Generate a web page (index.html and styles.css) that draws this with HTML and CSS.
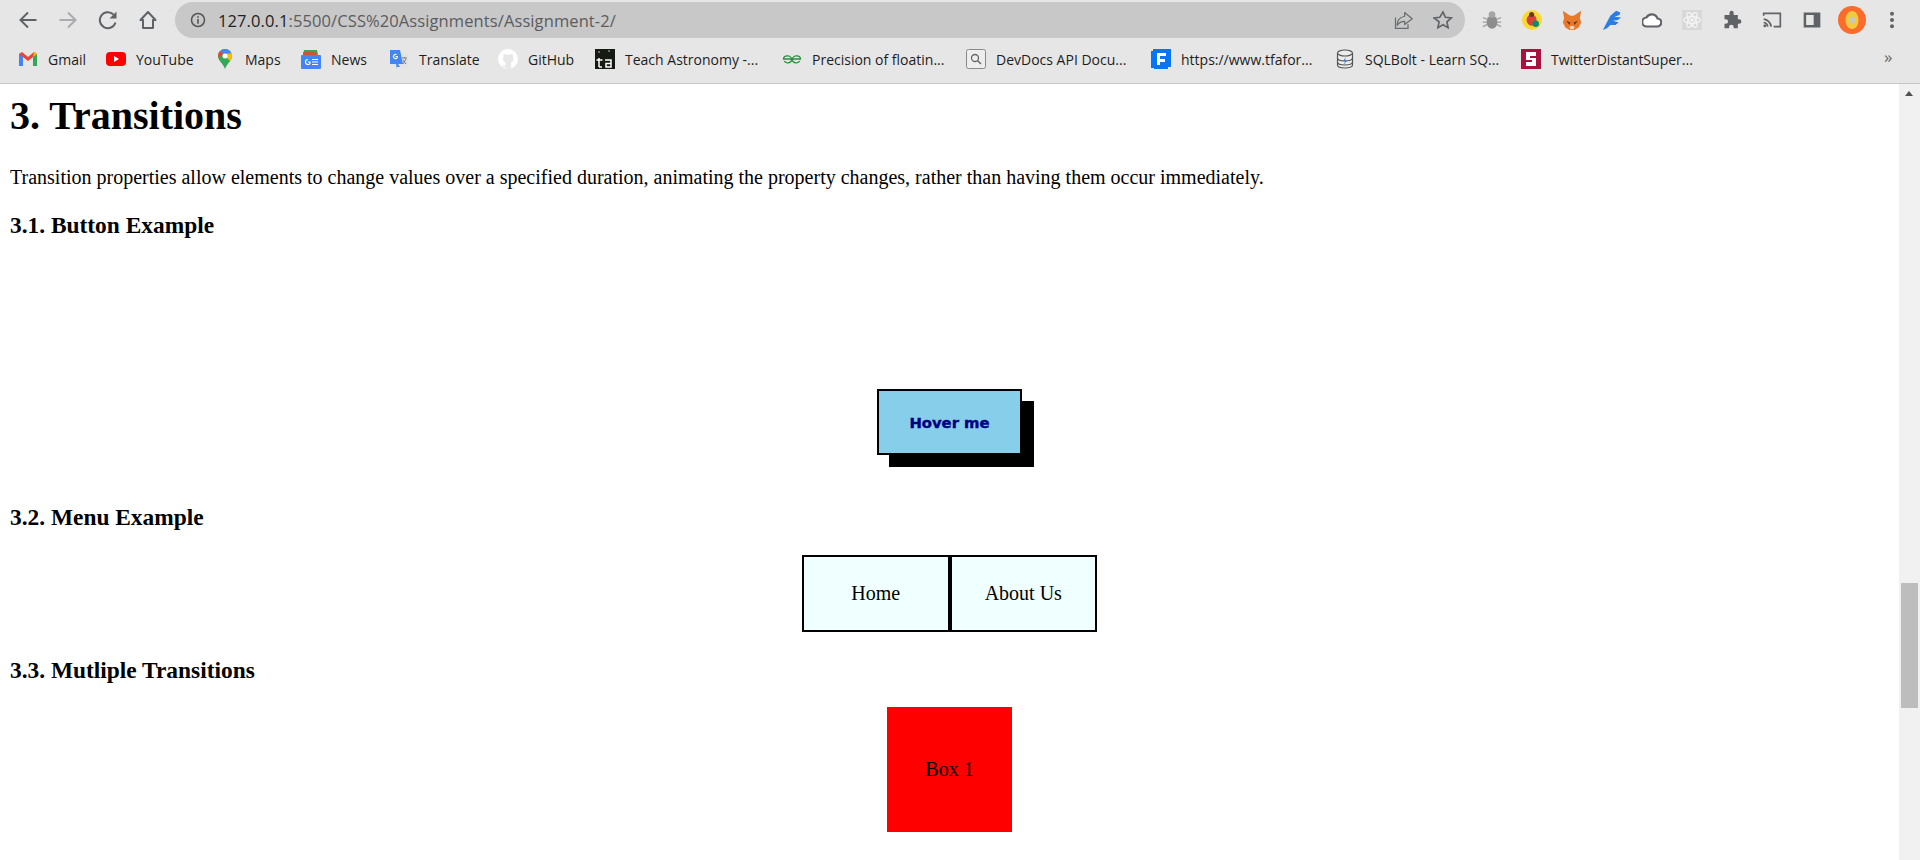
FILE: index.html
```html
<!DOCTYPE html>
<html lang="en">
<head>
<meta charset="utf-8">
<title>Assignment 2</title>
<link rel="stylesheet" href="styles.css">
</head>
<body>
<div class="window">
  <header class="chrome">
    <div class="toolbar">
      <nav class="nav">
        <svg class="nav-icon" viewBox="0 0 24 24"><path d="M20.500 12H5M12 4.500 4.500 12l7.500 7.500" fill="none" stroke="#5f6368" stroke-width="2"/></svg>
        <svg class="nav-icon" viewBox="0 0 24 24"><path d="M3.500 12H19M12 4.500l7.500 7.500-7.500 7.500" fill="none" stroke="#a9abae" stroke-width="2"/></svg>
        <svg class="nav-icon" viewBox="0 0 24 24"><path d="M19.500 14.500A8 8 0 1 1 17.500 6.500" fill="none" stroke="#5f6368" stroke-width="2"/><path d="M20.500 3.500v7h-7z" fill="#5f6368"/></svg>
        <svg class="nav-icon" viewBox="0 0 24 24"><path d="M12 4 4.500 12H7v8h10v-8h2.500z" fill="none" stroke="#5f6368" stroke-width="2" stroke-linejoin="round"/></svg>
      </nav>
      <div class="omnibox">
        <svg class="info" viewBox="0 0 16 16"><circle cx="8" cy="8" r="6.500" fill="none" stroke="#555" stroke-width="1.500"/><path d="M7.200 7h1.600v4.800H7.200zM7.200 4.200h1.600v1.600H7.200z" fill="#555"/></svg>
        <span class="url"><span class="host">127.0.0.1</span>:5500/CSS%20Assignments/Assignment-2/</span>
        <span class="omni-actions">
          <svg class="omni-icon" viewBox="0 0 24 24"><path d="M3 9v13h15v-5" fill="none" stroke="#6a6d70" stroke-width="1.500"/><path d="M14 3l9 7.500-9 7v-4c-4 0-7 1.500-9 5 0-6 3.500-10 9-11z" fill="none" stroke="#6a6d70" stroke-width="1.500" stroke-linejoin="round"/></svg>
          <svg class="omni-icon" viewBox="0 0 24 24"><path d="m12 2.500 2.900 6.300 6.900.800-5.100 4.700 1.400 6.900-6.100-3.500-6.100 3.500 1.400-6.900L1.200 9.600l6.900-.800z" fill="none" stroke="#5f6368" stroke-width="2"/></svg>
        </span>
      </div>
      <div class="extensions">
        <svg class="tb" viewBox="0 0 24 24"><ellipse cx="12" cy="14.500" rx="6.500" ry="8" fill="#8d8d8d"/><circle cx="12" cy="5.500" r="4" fill="#a5a5a5"/><path d="M1 9l5 2M1 14.500h5M1 20l5-2.500M23 9l-5 2M23 14.500h-5M23 20l-5-2.500" stroke="#a0a0a0" stroke-width="1.500"/></svg>
        <svg class="tb" viewBox="0 0 24 24"><ellipse cx="12" cy="12" rx="12" ry="12" fill="#fdd835"/><ellipse cx="11.500" cy="12" rx="6" ry="7" fill="#d9413a"/><circle cx="11.500" cy="5.500" r="3" fill="#5b3a36"/><circle cx="16.500" cy="16.500" r="4" fill="#0b8f6b"/></svg>
        <svg class="tb" viewBox="0 0 24 24"><path d="M1 1l9 6h4l9-6-1.500 9L23 15l-3 6-5 3h-6l-5-3-3-6 1.500-5z" fill="#e8792b"/><path d="M5 13l5 2-1 3zM19 13l-5 2 1 3z" fill="#5c3a1e"/><path d="M9 20l3-1 3 1-1 3h-4z" fill="#f3d9c4"/></svg>
        <svg class="tb" viewBox="0 0 24 24"><path d="M1 24 10 7l7-6 5 2-1 3-6 2 8 1-4 3-6 1 7 2-4 3H10l-4 4z" fill="#2b7de0"/></svg>
        <svg class="tb" viewBox="2 2 20 20"><path d="M7 18.500a4.500 4.500 0 0 1-.500-9 6 6 0 0 1 11 1 4 4 0 0 1-.500 8z" fill="#fff" stroke="#5f6368" stroke-width="2.200"/></svg>
        <svg class="tb" viewBox="0 0 24 24"><rect width="24" height="24" fill="#d8d8d8"/><g fill="none" stroke="#f5f5f5" stroke-width="1.500"><ellipse cx="12" cy="12" rx="10" ry="4"/><ellipse cx="12" cy="12" rx="10" ry="4" transform="rotate(60 12 12)"/><ellipse cx="12" cy="12" rx="10" ry="4" transform="rotate(120 12 12)"/></g><circle cx="12" cy="12" r="2" fill="#f5f5f5"/></svg>
        <svg class="tb" viewBox="0 0 24 24"><path d="M9 3.500a2.500 2.500 0 0 1 5 0V6h5v5h1.500a2.700 2.700 0 0 1 0 5.500H19V22h-5v-1.500a2.700 2.700 0 0 0-5.500 0V22H3v-5.500h1.500a2.700 2.700 0 0 0 0-5.500H3V6h6z" fill="#5f6368"/></svg>
        <svg class="tb" viewBox="0 0 24 24"><path d="M2 7V4h20v16h-8" fill="none" stroke="#5f6368" stroke-width="2"/><path d="M2 11a10 10 0 0 1 9 9M2 15a6 6 0 0 1 5 5" fill="none" stroke="#5f6368" stroke-width="2"/><circle cx="3.500" cy="19" r="1.800" fill="#5f6368"/></svg>
        <svg class="tb" viewBox="0 0 24 24"><path d="M2 3h20v18H2z" fill="#5f6368"/><path d="M5 6h9v12H5z" fill="#e7e7e7"/></svg>
        <svg class="tb avatar" viewBox="0 0 28 28"><circle cx="14" cy="14" r="14" fill="#fb6b2c"/><path d="M14 5c4 0 6.500 4 6.500 9s-2.500 9-6.500 9-6.500-4-6.500-9 2.500-9 6.500-9z" fill="#f4c93c"/><rect x="11" y="11" width="6" height="6" rx="1" fill="#c9c9b5"/></svg>
        <svg class="tb" viewBox="0 0 24 24"><circle cx="12" cy="4.500" r="2.400" fill="#5f6368"/><circle cx="12" cy="12" r="2.400" fill="#5f6368"/><circle cx="12" cy="19.500" r="2.400" fill="#5f6368"/></svg>
      </div>
    </div>
    <div class="bookmarks">
      <a class="bm bm-gmail"><svg class="fav" viewBox="0 0 20 20"><path d="M1 17V5l3-2 6 5 6-5 3 2v12h-4V8l-5 4-5-4v9z" fill="#ea4335"/><path d="M1 17V5l4 3v9z" fill="#4285f4"/><path d="M15 17V8l4-3v12z" fill="#34a853"/><path d="M16 3l3 2-4 3z" fill="#fbbc04"/></svg><span>Gmail</span></a>
      <a class="bm bm-yt"><svg class="fav" viewBox="0 0 20 20"><rect y="3" width="20" height="14" rx="4" fill="#f00"/><path d="M8 7l5 3-5 3z" fill="#fff"/></svg><span>YouTube</span></a>
      <a class="bm bm-maps"><svg class="fav" viewBox="0 0 20 20"><path d="M10 0a7 7 0 0 1 7 7c0 5-5 7-7 13C8 14 3 12 3 7a7 7 0 0 1 7-7z" fill="#34a853"/><path d="M5 2 15 12c1.300-1.500 2-3 2-5 0-1-.200-2-.700-2.800z" fill="#fbbc04"/><path d="M10 0a7 7 0 0 0-5 2.200L8 5l8.300-.800A7 7 0 0 0 10 0z" fill="#4285f4"/><path d="M5 2a7 7 0 0 0-1.500 7L8 5z" fill="#ea4335"/><circle cx="10" cy="7" r="2.500" fill="#fff"/></svg><span>Maps</span></a>
      <a class="bm bm-news"><svg class="fav" viewBox="0 0 20 20"><path d="M3 1h13l1 5H2z" fill="#34a853"/><path d="M2 3h12l2 3H2z" fill="#ea4335" opacity=".8"/><rect y="6" width="20" height="14" rx="1" fill="#4285f4"/><path d="M7 10.500a2.500 2.500 0 1 0 0 5 2 2 0 0 0 2-2.500H7M11 10.500h6M11 13h6M11 15.500h6" fill="none" stroke="#fff" stroke-width="1.200"/></svg><span>News</span></a>
      <a class="bm bm-translate"><svg class="fav" viewBox="0 0 20 20"><path d="M10 5h9v13h-8z" fill="#e3e3e3"/><path d="M1 1h10l3 14H9l2 3H8v2l-1-5H1z" fill="#4285f4"/><path d="M7.500 5.500a2.200 2.200 0 1 0 0 4 1.700 1.700 0 0 0 .800-2H6.500" fill="none" stroke="#fff" stroke-width="1.200"/><path d="M13 9h5M15.500 8v1M14 15l3-5M14 11l3 4" stroke="#777" fill="none"/></svg><span>Translate</span></a>
      <a class="bm bm-gh"><svg class="fav" viewBox="0 0 20 20"><circle cx="10" cy="10" r="10" fill="#fff"/><path d="M5.500 4.500 8 5.700a7 7 0 0 1 4 0l2.500-1.200.5 3.300c1 2 .5 5-2.500 6 .500.500.700 1 .700 2v4H7.300v-2c-2 .500-3-.500-3.500-2 1 0 1.500 1 2 1 .5 0 1 0 1.500-.300 0-1 .2-2 .700-2.700-3-1-3.500-4-2.500-6z" fill="#e7e7e7"/></svg><span>GitHub</span></a>
      <a class="bm bm-ta"><svg class="fav" viewBox="0 0 20 20"><rect width="20" height="20" fill="#151a12"/><circle cx="4" cy="3" r=".7" fill="#fff"/><circle cx="14" cy="2" r=".7" fill="#fff"/><path d="M4 9v9M1.500 11h6M4 18h3M10 11h6v7h-5v-3.500h5" fill="none" stroke="#fff" stroke-width="1.500"/></svg><span>Teach Astronomy -...</span></a>
      <a class="bm bm-gfg"><svg class="fav" viewBox="0 0 20 20"><path d="M9.500 10H1.500a4 3.200 0 0 1 7.500-1.500c1 2 1 3 0 4a4 3.200 0 0 1-6.800-.5M10.500 10h8a4 3.200 0 0 0-7.500-1.500c-1 2-1 3 0 4a4 3.200 0 0 0 6.800-.5" fill="none" stroke="#2f8d46" stroke-width="1.300"/></svg><span>Precision of floatin...</span></a>
      <a class="bm bm-dd"><svg class="fav" viewBox="0 0 20 20"><rect x=".5" y=".5" width="19" height="19" rx="2" fill="#eee" stroke="#8a8a8a"/><circle cx="9" cy="9" r="3.500" fill="none" stroke="#666" stroke-width="1.300"/><path d="m11.500 11.500 3.500 3.500" stroke="#666" stroke-width="1.500"/></svg><span>DevDocs API Docu...</span></a>
      <a class="bm bm-tf"><svg class="fav" viewBox="0 0 20 20"><path d="M2 0h18v18H2z" fill="#0b74f1"/><path d="M0 2h3v17H0zM3 18h14v2H3z" fill="#0b74f1"/><path d="M6 4h9v3H9v3h5v3H9v3H6z" fill="#fff"/></svg><span>https://www.tfafor...</span></a>
      <a class="bm bm-sql"><svg class="fav" viewBox="0 0 20 20"><path d="M2.500 4v12c0 2 3.500 3 7.500 3s7.500-1 7.500-3V4" fill="#ececec" stroke="#555" stroke-width="1.200"/><ellipse cx="10" cy="4" rx="7.500" ry="3" fill="#ececec" stroke="#555" stroke-width="1.200"/><path d="M2.500 9c0 2 3.500 3 7.500 3s7.500-1 7.500-3M2.500 13c0 2 3.500 3 7.500 3s7.500-1 7.500-3" fill="none" stroke="#555" stroke-width="1.200"/><path d="M11 8l-3 4h2l-1 4 3-5h-2z" fill="#3b79d8"/></svg><span>SQLBolt - Learn SQ...</span></a>
      <a class="bm bm-su"><svg class="fav" viewBox="0 0 20 20"><rect width="20" height="20" fill="#a8123e"/><path d="M15 3H5v8h6v2H5v4h10V9H9V7h6z" fill="#fff"/></svg><span>TwitterDistantSuper...</span></a>
      <span class="more">»</span>
    </div>
  </header>
  <div class="viewport">
    <main class="page">
      <h1 class="title">3. Transitions</h1>
      <p class="lead">Transition properties allow elements to change values over a specified duration, animating the property changes, rather than having them occur immediately.</p>
      <h3 class="sub">3.1. Button Example</h3>
      <div class="button-demo"><button class="hover-btn" type="button">Hover me</button></div>
      <h3 class="sub">3.2. Menu Example</h3>
      <ul class="menu"><li class="menu-item">Home</li><li class="menu-item">About Us</li></ul>
      <h3 class="sub">3.3. Mutliple Transitions</h3>
      <div class="box-demo"><div class="box">Box 1</div></div>
    </main>
    <div class="scrollbar">
      <div class="arrow"></div>
      <div class="thumb"></div>
    </div>
  </div>
</div>
</body>
</html>
```

FILE: styles.css
```css
* { box-sizing: border-box; }
html, body { margin: 0; height: 100%; overflow: hidden; background: #fff; }
.window { display: flex; flex-direction: column; height: 860px; }
.chrome { height: 84px; flex: none; background: #e6e6e6; border-bottom: 1px solid #c6c6c6; font-family: "Open Sans", "Noto Sans", sans-serif; }

.toolbar { height: 40px; display: flex; align-items: center; }
.nav { width: 175px; flex: none; display: flex; gap: 16px; padding-left: 16px; }
.nav-icon { width: 24px; height: 24px; flex: none; display: block; }
.tb { width: 20px; height: 20px; flex: none; display: block; }
.omnibox { width: 1290px; height: 36px; flex: none; background: #c8c8c8; border-radius: 18px; display: flex; align-items: center; padding-left: 15px; }
.info { width: 16px; height: 16px; flex: none; }
.url { margin-left: 12px; font-size: 16.500px; color: #5a5c5f; white-space: nowrap; letter-spacing: .1px; }
.host { color: #222; }
.omni-actions { margin-left: auto; display: flex; gap: 20px; padding-right: 12px; align-items: center; }
.omni-icon { width: 20px; height: 20px; }
.extensions { display: flex; align-items: center; gap: 20px; padding-left: 17px; }
.avatar { width: 28px; height: 28px; margin: 0 -4px; }

.bookmarks { height: 43px; display: flex; align-items: center; position: relative; padding: 0 0 5px 18px; }
.bm { display: flex; align-items: center; gap: 10px; font-size: 14px; color: #1d1d1d; white-space: nowrap; flex: none; }
.fav { width: 20px; height: 20px; flex: none; }
.bm-gmail { width: 88px; }
.bm-yt { width: 109px; }
.bm-maps { width: 86px; }
.bm-news { width: 88px; }
.bm-translate { width: 109px; }
.bm-gh { width: 97px; }
.bm-ta { width: 187px; }
.bm-gfg { width: 184px; }
.bm-dd { width: 185px; }
.bm-tf { width: 184px; }
.bm-sql { width: 186px; }
.bm-su { width: 190px; }
.more { position: absolute; left: 1884px; top: 5px; font-size: 17px; color: #666; }

.viewport { flex: 1; display: flex; min-height: 0; overflow: hidden; }
.page { flex: 1; min-width: 0; padding: 0 10px; color: #000; font-family: "Liberation Serif", serif; font-size: 20px; overflow: hidden; }
.title { font-size: 40px; font-weight: bold; margin: 10px 0 0; line-height: 44px; }
.lead { margin: 28px 0 23px; line-height: 23px; }
.sub { font-size: 23.400px; font-weight: bold; margin: 22px 0 0; line-height: 27px; }
.button-demo { height: 243px; display: flex; justify-content: center; align-items: flex-end; }
.hover-btn { width: 145px; height: 66px; margin-bottom: 27px; background: skyblue; border: 2px solid #000; box-shadow: 12px 12px 0 #000; color: navy; font: bold 14.800px "DejaVu Sans", sans-serif; -webkit-text-stroke: .4px navy; padding: 0; }
.menu { list-style: none; margin: 24px 0 25px; padding: 0; display: flex; justify-content: center; }
.menu-item { width: 147.500px; height: 77px; background: azure; border: 2px solid #000; display: flex; align-items: center; justify-content: center; }
.box-demo { display: flex; justify-content: center; margin-top: 23px; }
.box { width: 125px; height: 125px; background: #f00; display: flex; align-items: center; justify-content: center; }

.scrollbar { width: 21px; flex: none; background: #f1f1f1; position: relative; }
.arrow { position: absolute; top: 7px; left: 6px; width: 0; height: 0; border-left: 4.500px solid transparent; border-right: 4.500px solid transparent; border-bottom: 5px solid #505050; }
.thumb { position: absolute; top: 499px; left: 2px; width: 17px; height: 125px; background: #bdbdbd; }
```
